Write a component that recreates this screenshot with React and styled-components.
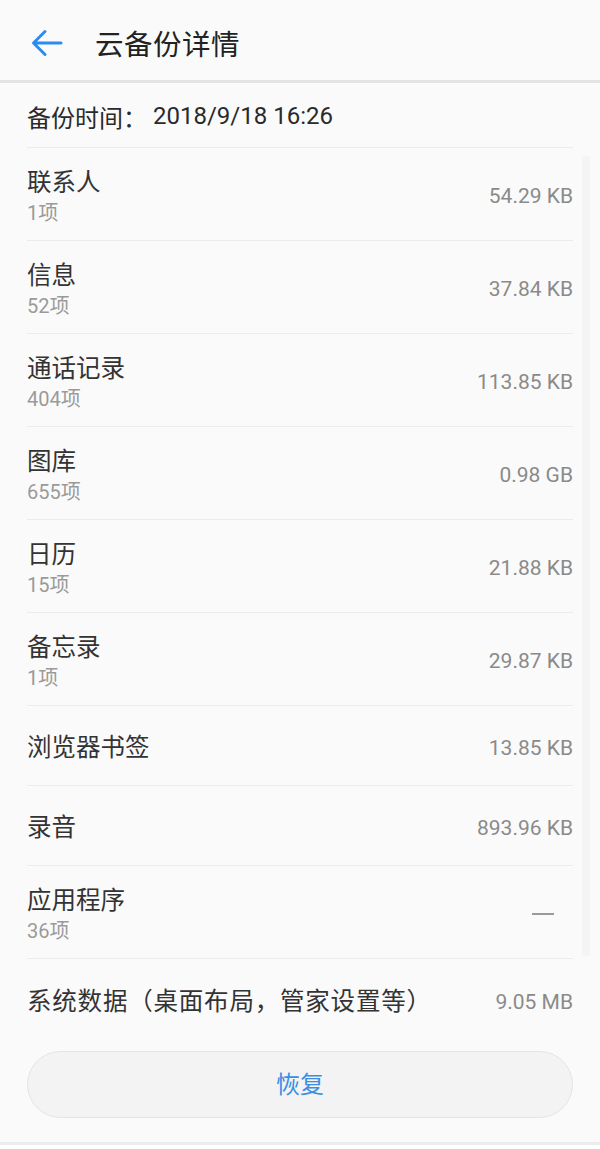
import React from "react";
import styled, { createGlobalStyle } from "styled-components";

const GlobalStyle = createGlobalStyle`
  html, body { margin: 0; padding: 0; background: #ffffff; }
  body { font-family: Roboto, "Noto Sans CJK SC", "Noto Sans", sans-serif; }
  * { box-sizing: border-box; }
`;

const Screen = styled.div`
  width: 600px;
  height: 1149px;
  background: #fafafa;
  display: flex;
  flex-direction: column;
  overflow: hidden;
`;

const Header = styled.header`
  height: 83px;
  flex: none;
  display: flex;
  align-items: center;
  padding: 5px 0 0 31px;
  border-bottom: 3px solid #e4e4e4;
  gap: 31px;
`;

const BackButton = styled.button`
  border: 0;
  background: none;
  padding: 0;
  width: 33px;
  height: 30px;
  display: flex;
  align-items: center;
  cursor: pointer;
`;

const Title = styled.h1`
  margin: 0;
  font-size: 28.5px;
  font-weight: 400;
  color: #222222;
  letter-spacing: 0.5px;
`;

const Body = styled.main`
  flex: 1;
  display: flex;
  flex-direction: column;
  padding: 0 27px;
`;

const TimeRow = styled.div`
  height: 65px;
  display: flex;
  align-items: center;
  padding-top: 2px;
  border-bottom: 1px solid #ececec;
  font-size: 24px;
  font-weight: 400;
  color: #2a2a2a;
`;

const TimeLabel = styled.span`
  margin-right: 6px;
`;

const List = styled.div`
  position: relative;
`;

const ScrollTrack = styled.div`
  position: absolute;
  right: -17px;
  top: 8px;
  width: 8px;
  height: 800px;
  background: #f4f4f4;
`;

const Row = styled.div`
  height: ${(p) => (p.$sub ? 93 : 80)}px;
  display: flex;
  align-items: center;
  justify-content: space-between;
  padding-top: ${(p) => (p.$sub ? 3 : 5)}px;
  border-bottom: ${(p) => (p.$last ? "none" : "1px solid #ececec")};
`;

const Labels = styled.div`
  display: flex;
  flex-direction: column;
`;

const Name = styled.div`
  font-size: 24.5px;
  line-height: 34px;
  color: #333333;
  letter-spacing: ${(p) => (p.$wide ? "0.8px" : "0")};
`;

const Sub = styled.div`
  font-size: 20px;
  line-height: 26px;
  color: #9a9a9a;
`;

const Size = styled.div`
  font-size: 21px;
  color: #8a8a8a;
`;

const Dash = styled.div`
  width: 22px;
  height: 2px;
  background: #9a9a9a;
  margin-right: 19px;
`;

const RestoreButton = styled.button`
  margin-top: 12px;
  height: 67px;
  width: 100%;
  border-radius: 34px;
  border: 1px solid #e4e4e4;
  background: #f3f3f3;
  color: #3a8ee4;
  font-family: Roboto, "Noto Sans CJK SC", sans-serif;
  font-size: 24px;
  padding-bottom: 5px;
  cursor: pointer;
`;

const Footer = styled.div`
  margin-top: auto;
  height: 32px;
  flex: none;
  border-top: 3px solid #ececec;
  background: #ffffff;
  margin-bottom: -25px;
`;

const items = [
  { name: "联系人", sub: "1项", size: "54.29 KB" },
  { name: "信息", sub: "52项", size: "37.84 KB" },
  { name: "通话记录", sub: "404项", size: "113.85 KB" },
  { name: "图库", sub: "655项", size: "0.98 GB" },
  { name: "日历", sub: "15项", size: "21.88 KB" },
  { name: "备忘录", sub: "1项", size: "29.87 KB" },
  { name: "浏览器书签", size: "13.85 KB" },
  { name: "录音", size: "893.96 KB" },
  { name: "应用程序", sub: "36项", size: null },
  { name: "系统数据（桌面布局，管家设置等）", size: "9.05 MB", last: true, wide: true },
];

function ArrowLeft() {
  return (
    <svg width="32" height="28" viewBox="0 0 32 28" fill="none">
      <path
        d="M30 14H3M14 2.5L2.5 14L14 25.5"
        stroke="#2b8cf0"
        strokeWidth="3"
        strokeLinecap="round"
        strokeLinejoin="round"
      />
    </svg>
  );
}

export default function App() {
  return (
    <>
      <GlobalStyle />
      <Screen>
        <Header>
          <BackButton aria-label="返回">
            <ArrowLeft />
          </BackButton>
          <Title>云备份详情</Title>
        </Header>
        <Body>
          <TimeRow>
            <TimeLabel>备份时间：</TimeLabel>2018/9/18 16:26
          </TimeRow>
          <List>
            <ScrollTrack />
            {items.map((it) => (
              <Row key={it.name} $sub={!!it.sub} $last={it.last}>
                <Labels>
                  <Name $wide={it.wide}>{it.name}</Name>
                  {it.sub && <Sub>{it.sub}</Sub>}
                </Labels>
                {it.size ? <Size>{it.size}</Size> : <Dash />}
              </Row>
            ))}
          </List>
          <RestoreButton>恢复</RestoreButton>
        </Body>
        <Footer />
      </Screen>
    </>
  );
}
